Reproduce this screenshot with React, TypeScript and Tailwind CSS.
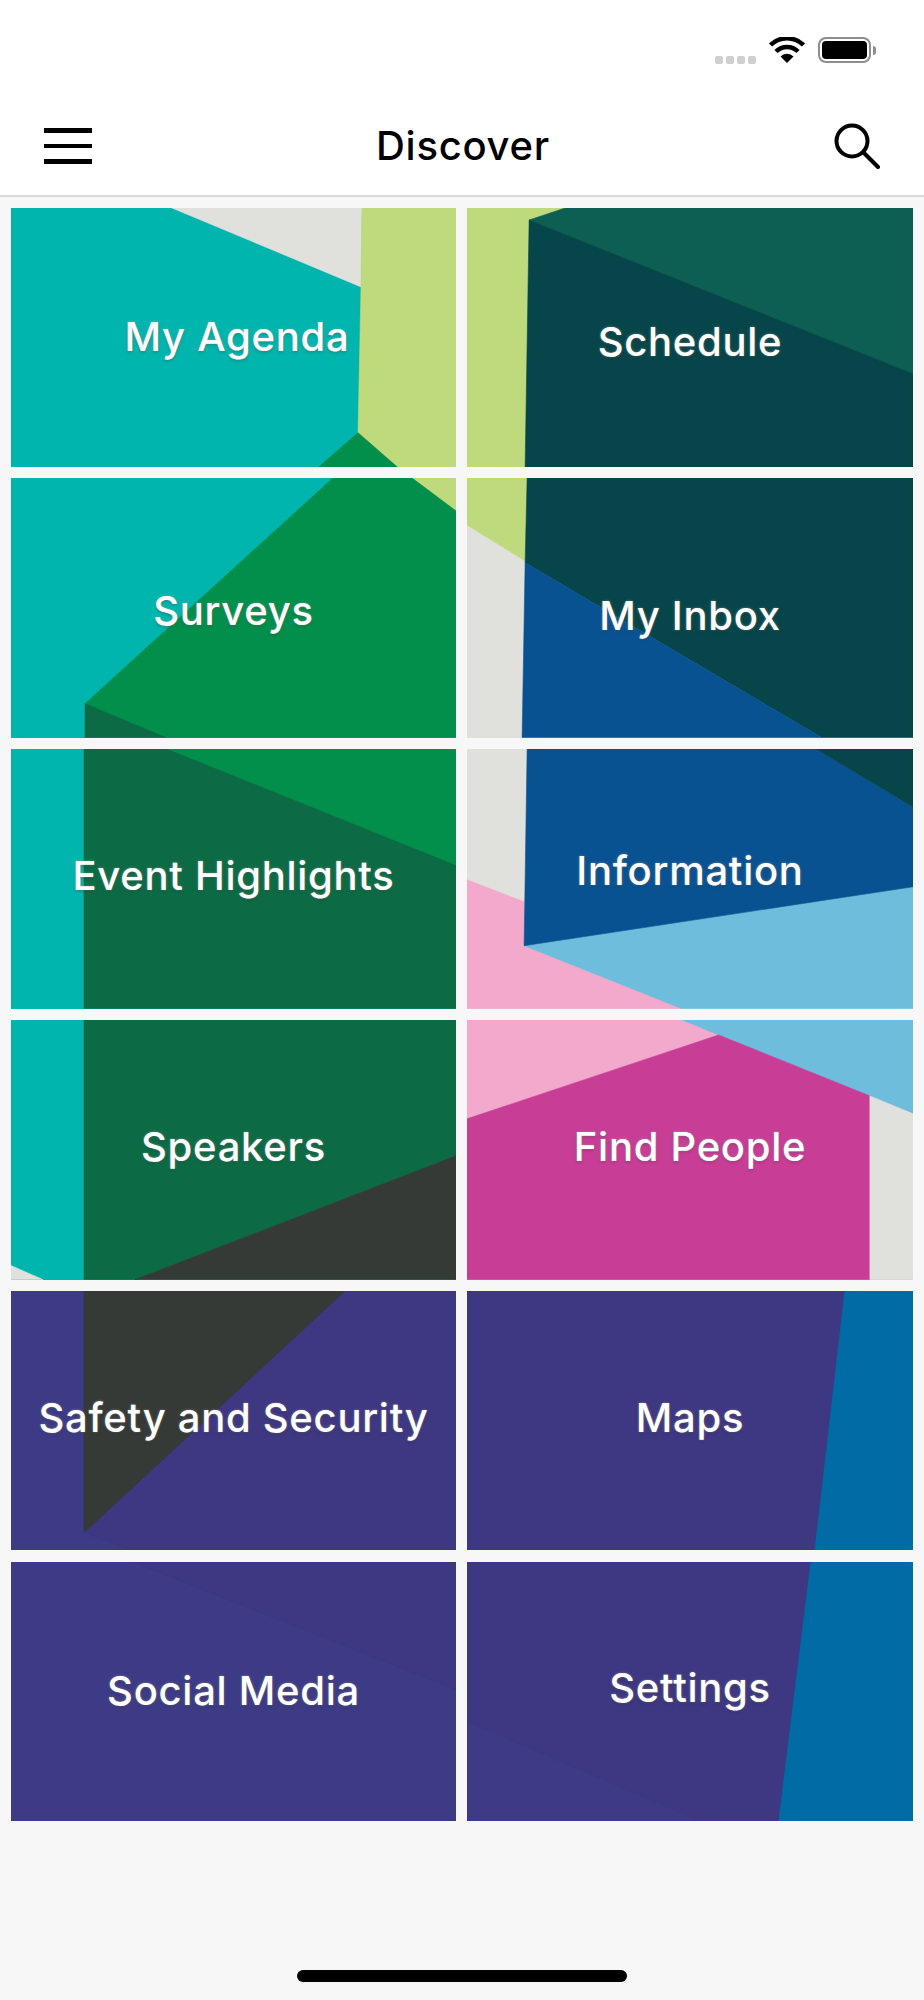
type Shape = { fill: string; points: string };

type TileData = {
  label: string;
  bg: string;
  pad: string;
  shapes: Shape[];
};

const teal = "#00b5ad";
const lime = "#bfda7c";
const stone = "#e0e1dc";
const green = "#028f4b";
const forest = "#0c6b44";
const pine = "#0e5f53";
const deep = "#06464a";
const navy = "#095292";
const sky = "#6fbddc";
const pink = "#f2a9cc";
const magenta = "#c83d96";
const slate = "#353a37";
const indigo = "#3e3781";
const indigoLight = "#3d3b85";
const ocean = "#016ba6";

const tiles: TileData[] = [
  {
    label: "My Agenda",
    bg: teal,
    pad: "pl-[7px]",
    shapes: [
      { fill: stone, points: "161,0 351,0 350,79" },
      { fill: lime, points: "351,0 445,0 445,260 387,260 347,227 350,79" },
      { fill: green, points: "307,260 347,225 387,260" },
    ],
  },
  {
    label: "Schedule",
    bg: lime,
    pad: "pt-[9px]",
    shapes: [
      { fill: pine, points: "98,0 445,0 445,166 62,12" },
      { fill: deep, points: "62,12 445,166 445,260 58,260" },
    ],
  },
  {
    label: "Surveys",
    bg: teal,
    pad: "pt-[6px]",
    shapes: [
      { fill: lime, points: "401,0 445,0 445,33" },
      { fill: green, points: "322,0 401,0 445,33 445,260 155,260 74,226" },
      { fill: forest, points: "74,226 155,260 74,260" },
    ],
  },
  {
    label: "My Inbox",
    bg: stone,
    pad: "pt-[15px]",
    shapes: [
      { fill: lime, points: "0,0 60,0 58,83 0,47" },
      { fill: deep, points: "60,0 445,0 445,260 354,260 58,85" },
      { fill: navy, points: "58,85 354,260 55,260" },
    ],
  },
  {
    label: "Event Highlights",
    bg: teal,
    pad: "pb-[5px]",
    shapes: [
      { fill: forest, points: "73,0 157,0 445,116 445,260 73,260" },
      { fill: green, points: "157,0 445,0 445,116" },
    ],
  },
  {
    label: "Information",
    bg: stone,
    pad: "pb-[15px]",
    shapes: [
      { fill: pink, points: "0,131 57,153 57,197 214,260 0,260" },
      { fill: sky, points: "57,197 445,138 445,260 214,260" },
      { fill: navy, points: "60,0 348,0 445,58 445,138 57,197" },
      { fill: deep, points: "348,0 445,0 445,58" },
    ],
  },
  {
    label: "Speakers",
    bg: teal,
    pad: "pb-[5px]",
    shapes: [
      { fill: stone, points: "0,246 32,260 0,260" },
      { fill: forest, points: "73,0 445,0 445,136 124,260 73,260" },
      { fill: slate, points: "445,136 445,260 124,260" },
    ],
  },
  {
    label: "Find People",
    bg: pink,
    pad: "pb-[6px]",
    shapes: [
      { fill: sky, points: "215,0 445,0 445,94 402,76 251,15" },
      { fill: magenta, points: "251,15 402,76 402,260 0,260 0,99" },
      { fill: stone, points: "402,76 445,94 445,260 402,260" },
    ],
  },
  {
    label: "Safety and Security",
    bg: indigoLight,
    pad: "pb-[6px]",
    shapes: [
      { fill: indigo, points: "73,242 334,0 445,0 445,260 120,260" },
      { fill: slate, points: "73,0 334,0 73,242" },
    ],
  },
  {
    label: "Maps",
    bg: indigo,
    pad: "pb-[6px]",
    shapes: [{ fill: ocean, points: "377,0 445,0 445,260 347,260" }],
  },
  {
    label: "Social Media",
    bg: indigoLight,
    pad: "",
    shapes: [{ fill: indigo, points: "122,0 445,0 445,128" }],
  },
  {
    label: "Settings",
    bg: indigo,
    pad: "pb-[6px]",
    shapes: [
      { fill: indigoLight, points: "0,160 234,260 0,260" },
      { fill: ocean, points: "343,0 445,0 445,260 311,260" },
    ],
  },
];

function Tile({ tile }: { tile: TileData }) {
  return (
    <a
      className={`relative flex h-[259.6px] items-center justify-center overflow-hidden ${tile.pad}`}
      style={{ backgroundColor: tile.bg }}
    >
      <svg
        className="absolute inset-0 h-full w-full"
        viewBox="0 0 445 260"
        preserveAspectRatio="none"
      >
        {tile.shapes.map((shape) => (
          <polygon
            key={shape.points}
            fill={shape.fill}
            stroke={shape.fill}
            strokeWidth="0.6"
            points={shape.points}
          />
        ))}
      </svg>
      <span className="relative text-[40px] leading-none font-medium tracking-[0.018em] whitespace-nowrap text-white [text-shadow:0_0_3px_rgba(255,255,255,0.35),0_1px_3px_rgba(0,0,0,0.4)]">
        {tile.label}
      </span>
    </a>
  );
}

function StatusBar() {
  return (
    <div className="flex h-[76px] items-start justify-end pt-[37px] pr-[48px]">
      <div className="mt-[19px] flex gap-[3px]">
        <span className="h-[8px] w-[8px] rounded-[2px] bg-[#cfcfcf]" />
        <span className="h-[8px] w-[8px] rounded-[2px] bg-[#cfcfcf]" />
        <span className="h-[8px] w-[8px] rounded-[2px] bg-[#cfcfcf]" />
        <span className="h-[8px] w-[8px] rounded-[2px] bg-[#cfcfcf]" />
      </div>
      <svg className="ml-[13px]" width="36" height="26" viewBox="0 0 36 26">
        <path d="M18 26 L11.5 19.5 A9 9 0 0 1 24.5 19.5 Z" fill="#000" />
        <path d="M7 14.5 A15.5 15.5 0 0 1 29 14.5" fill="none" stroke="#000" strokeWidth="4.5" />
        <path d="M1.5 8 A23.5 23.5 0 0 1 34.5 8" fill="none" stroke="#000" strokeWidth="4.5" />
      </svg>
      <div className="ml-[13px] flex items-center">
        <div className="flex h-[26px] w-[53px] items-center justify-center rounded-[8px] border-2 border-[#8e8e8e]">
          <div className="h-[18px] w-[45px] rounded-[4px] bg-black" />
        </div>
        <div className="ml-[2px] h-[9px] w-[3px] rounded-r-full bg-[#8e8e8e]" />
      </div>
    </div>
  );
}

function NavBar() {
  return (
    <div className="flex h-[121px] items-center justify-between border-b-2 border-[#d9d9d9] bg-white pt-[21px] pr-[44px] pl-[44px]">
      <div className="flex w-[48px] flex-col gap-[11px]">
        <span className="h-[4.5px] bg-black" />
        <span className="h-[4.5px] bg-black" />
        <span className="h-[4.5px] bg-black" />
      </div>
      <h1 className="text-[40px] leading-none font-medium tracking-[0.018em] text-black">Discover</h1>
      <svg width="46" height="46" viewBox="0 0 46 46" fill="none" stroke="#000" strokeWidth="4" strokeLinecap="round">
        <circle cx="18" cy="18" r="15.5" />
        <path d="M29.5 29.5 L44 44" />
      </svg>
    </div>
  );
}

export default function App() {
  return (
    <div
      className="flex h-[2000px] w-[924px] flex-col bg-[#f7f7f7]"
      style={{ fontFamily: '"Inter", "Noto Sans", sans-serif' }}
    >
      <div className="bg-white">
        <StatusBar />
        <NavBar />
      </div>
      <main className="grid flex-1 grid-cols-[445px_446px] content-start gap-x-[11px] gap-y-[11.2px] px-[11px] pt-[10.6px]">
        {tiles.map((tile) => (
          <Tile key={tile.label} tile={tile} />
        ))}
      </main>
      <div className="flex justify-center pb-[18px]">
        <div className="h-[12px] w-[330px] rounded-full bg-black" />
      </div>
    </div>
  );
}
